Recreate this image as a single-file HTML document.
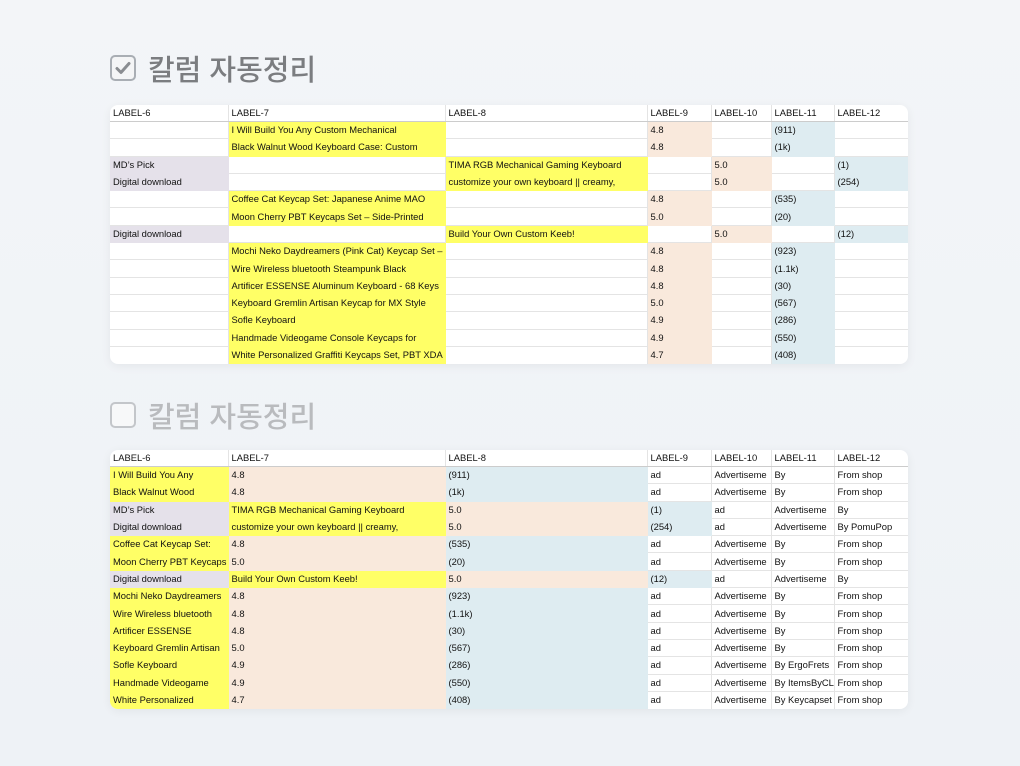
<!DOCTYPE html>
<html><head><meta charset="utf-8"><style>
*{margin:0;padding:0;box-sizing:border-box}
body{width:1020px;height:766px;background:linear-gradient(180deg,#f3f5f8,#eef2f6);font-family:"Liberation Sans",sans-serif;position:relative;overflow:hidden}
.title{position:absolute;left:110px;display:flex;align-items:center;font-family:"Liberation Sans","Noto Sans CJK KR",sans-serif;font-size:29px;font-weight:500;letter-spacing:0px}
.cb{width:26px;height:26px;border:2px solid #a9aeb4;border-radius:5px;margin-right:12px;background:#fff;display:flex;align-items:center;justify-content:center}
.card{position:absolute;left:110px;width:798px;background:#fff;border-radius:8px;overflow:hidden;box-shadow:0 2px 10px rgba(0,0,0,0.06)}
table{border-collapse:collapse;width:798px;table-layout:fixed;font-size:9.4px;color:#111}
td{height:17.3px;padding:0 3px;white-space:nowrap;overflow:hidden;border-bottom:1px solid #e4e4e4;border-right:1px solid #e4e4e4;line-height:16px}
tr.h td{height:16px;border-bottom:1px solid #ccc}
tr:last-child td{border-bottom:none}
td:last-child{border-right:none}
.y{background:#ffff66;border-color:#ffff66}
.p{background:#f9e9dc;border-color:#f9e9dc}
.b{background:#deecf1;border-color:#deecf1}
.l{background:#e5e1ea;border-color:#e5e1ea}
</style></head><body>
<div class="title" style="top:47px;color:#7b7d80"><div class="cb" style="background:#f4f5f6"><svg width="16" height="14" viewBox="0 0 16 14"><path d="M2 7.5l4 4 8-9" fill="none" stroke="#8a8d91" stroke-width="3" stroke-linecap="round" stroke-linejoin="round"/></svg></div>칼럼 자동정리</div>
<div class="card" style="top:105px">
<table>
<colgroup><col style="width:118px"><col style="width:217px"><col style="width:202px"><col style="width:64px"><col style="width:60px"><col style="width:63px"><col style="width:74px"></colgroup>
<tr class="h"><td>LABEL-6</td><td>LABEL-7</td><td>LABEL-8</td><td>LABEL-9</td><td>LABEL-10</td><td>LABEL-11</td><td>LABEL-12</td></tr>
<tr><td></td><td class="y">I Will Build You Any Custom Mechanical</td><td></td><td class="p">4.8</td><td></td><td class="b">(911)</td><td></td></tr>
<tr><td></td><td class="y">Black Walnut Wood Keyboard Case: Custom</td><td></td><td class="p">4.8</td><td></td><td class="b">(1k)</td><td></td></tr>
<tr><td class="l">MD’s Pick</td><td></td><td class="y">TIMA RGB Mechanical Gaming Keyboard</td><td></td><td class="p">5.0</td><td></td><td class="b">(1)</td></tr>
<tr><td class="l">Digital download</td><td></td><td class="y">customize your own keyboard || creamy,</td><td></td><td class="p">5.0</td><td></td><td class="b">(254)</td></tr>
<tr><td></td><td class="y">Coffee Cat Keycap Set: Japanese Anime MAO</td><td></td><td class="p">4.8</td><td></td><td class="b">(535)</td><td></td></tr>
<tr><td></td><td class="y">Moon Cherry PBT Keycaps Set – Side-Printed</td><td></td><td class="p">5.0</td><td></td><td class="b">(20)</td><td></td></tr>
<tr><td class="l">Digital download</td><td></td><td class="y">Build Your Own Custom Keeb!</td><td></td><td class="p">5.0</td><td></td><td class="b">(12)</td></tr>
<tr><td></td><td class="y">Mochi Neko Daydreamers (Pink Cat) Keycap Set –</td><td></td><td class="p">4.8</td><td></td><td class="b">(923)</td><td></td></tr>
<tr><td></td><td class="y">Wire Wireless bluetooth Steampunk Black</td><td></td><td class="p">4.8</td><td></td><td class="b">(1.1k)</td><td></td></tr>
<tr><td></td><td class="y">Artificer ESSENSE Aluminum Keyboard - 68 Keys</td><td></td><td class="p">4.8</td><td></td><td class="b">(30)</td><td></td></tr>
<tr><td></td><td class="y">Keyboard Gremlin Artisan Keycap for MX Style</td><td></td><td class="p">5.0</td><td></td><td class="b">(567)</td><td></td></tr>
<tr><td></td><td class="y">Sofle Keyboard</td><td></td><td class="p">4.9</td><td></td><td class="b">(286)</td><td></td></tr>
<tr><td></td><td class="y">Handmade Videogame Console Keycaps for</td><td></td><td class="p">4.9</td><td></td><td class="b">(550)</td><td></td></tr>
<tr><td></td><td class="y">White Personalized Graffiti Keycaps Set, PBT XDA</td><td></td><td class="p">4.7</td><td></td><td class="b">(408)</td><td></td></tr>
</table></div>

<div class="title" style="top:394px;color:#b9bbbe"><div class="cb" style="border-color:#c3c6ca;background:#f7f8f9"></div>칼럼 자동정리</div>
<div class="card" style="top:450px">
<table>
<colgroup><col style="width:118px"><col style="width:217px"><col style="width:202px"><col style="width:64px"><col style="width:60px"><col style="width:63px"><col style="width:74px"></colgroup>
<tr class="h"><td>LABEL-6</td><td>LABEL-7</td><td>LABEL-8</td><td>LABEL-9</td><td>LABEL-10</td><td>LABEL-11</td><td>LABEL-12</td></tr>
<tr><td class="y">I Will Build You Any</td><td class="p">4.8</td><td class="b">(911)</td><td>ad</td><td>Advertiseme</td><td>By</td><td>From shop</td></tr>
<tr><td class="y">Black Walnut Wood</td><td class="p">4.8</td><td class="b">(1k)</td><td>ad</td><td>Advertiseme</td><td>By</td><td>From shop</td></tr>
<tr><td class="l">MD’s Pick</td><td class="y">TIMA RGB Mechanical Gaming Keyboard</td><td class="p">5.0</td><td class="b">(1)</td><td>ad</td><td>Advertiseme</td><td>By</td></tr>
<tr><td class="l">Digital download</td><td class="y">customize your own keyboard || creamy,</td><td class="p">5.0</td><td class="b">(254)</td><td>ad</td><td>Advertiseme</td><td>By PomuPop</td></tr>
<tr><td class="y">Coffee Cat Keycap Set:</td><td class="p">4.8</td><td class="b">(535)</td><td>ad</td><td>Advertiseme</td><td>By</td><td>From shop</td></tr>
<tr><td class="y">Moon Cherry PBT Keycaps</td><td class="p">5.0</td><td class="b">(20)</td><td>ad</td><td>Advertiseme</td><td>By</td><td>From shop</td></tr>
<tr><td class="l">Digital download</td><td class="y">Build Your Own Custom Keeb!</td><td class="p">5.0</td><td class="b">(12)</td><td>ad</td><td>Advertiseme</td><td>By</td></tr>
<tr><td class="y">Mochi Neko Daydreamers</td><td class="p">4.8</td><td class="b">(923)</td><td>ad</td><td>Advertiseme</td><td>By</td><td>From shop</td></tr>
<tr><td class="y">Wire Wireless bluetooth</td><td class="p">4.8</td><td class="b">(1.1k)</td><td>ad</td><td>Advertiseme</td><td>By</td><td>From shop</td></tr>
<tr><td class="y">Artificer ESSENSE</td><td class="p">4.8</td><td class="b">(30)</td><td>ad</td><td>Advertiseme</td><td>By</td><td>From shop</td></tr>
<tr><td class="y">Keyboard Gremlin Artisan</td><td class="p">5.0</td><td class="b">(567)</td><td>ad</td><td>Advertiseme</td><td>By</td><td>From shop</td></tr>
<tr><td class="y">Sofle Keyboard</td><td class="p">4.9</td><td class="b">(286)</td><td>ad</td><td>Advertiseme</td><td>By ErgoFrets</td><td>From shop</td></tr>
<tr><td class="y">Handmade Videogame</td><td class="p">4.9</td><td class="b">(550)</td><td>ad</td><td>Advertiseme</td><td>By ItemsByCL</td><td>From shop</td></tr>
<tr><td class="y">White Personalized</td><td class="p">4.7</td><td class="b">(408)</td><td>ad</td><td>Advertiseme</td><td>By Keycapset</td><td>From shop</td></tr>
</table></div>
</body></html>
